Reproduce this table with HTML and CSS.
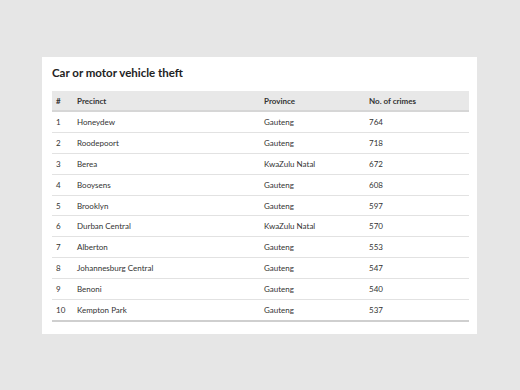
FILE: index.html
```html
<!DOCTYPE html>
<html>
<head>
<meta charset="utf-8">
<link rel="stylesheet" href="styles.css">
</head>
<body>
<div class="card">
  <h2 class="title">Car or motor vehicle theft</h2>
  <table class="tbl">
    <colgroup>
      <col class="c-num"><col class="c-prec"><col class="c-prov"><col class="c-cnt">
    </colgroup>
    <thead>
      <tr><th>#</th><th>Precinct</th><th>Province</th><th>No. of crimes</th></tr>
    </thead>
    <tbody>
      <tr><td>1</td><td>Honeydew</td><td>Gauteng</td><td>764</td></tr>
      <tr><td>2</td><td>Roodepoort</td><td>Gauteng</td><td>718</td></tr>
      <tr><td>3</td><td>Berea</td><td>KwaZulu Natal</td><td>672</td></tr>
      <tr><td>4</td><td>Booysens</td><td>Gauteng</td><td>608</td></tr>
      <tr><td>5</td><td>Brooklyn</td><td>Gauteng</td><td>597</td></tr>
      <tr><td>6</td><td>Durban Central</td><td>KwaZulu Natal</td><td>570</td></tr>
      <tr><td>7</td><td>Alberton</td><td>Gauteng</td><td>553</td></tr>
      <tr><td>8</td><td>Johannesburg Central</td><td>Gauteng</td><td>547</td></tr>
      <tr><td>9</td><td>Benoni</td><td>Gauteng</td><td>540</td></tr>
      <tr><td>10</td><td>Kempton Park</td><td>Gauteng</td><td>537</td></tr>
    </tbody>
  </table>
</div>
</body>
</html>
```
FILE: styles.css
```css
html, body {
  margin: 0;
  padding: 0;
  background: #e6e6e6;
  font-family: Lato, "Open Sans", sans-serif;
  color: #333;
}
body {
  padding: 57px 0 0 42px;
}
.card {
  width: 417px;
  background: #fff;
  padding: 9px 8px 12px 10px;
}
.title {
  margin: 0;
  font-size: 11.5px;
  font-weight: 700;
  line-height: 14px;
  padding: 0 0 11px 0;
  color: #222;
}
.tbl {
  width: 417px;
  border-collapse: collapse;
  table-layout: fixed;
  font-size: 8px;
}
.c-num { width: 21px; }
.c-prec { width: 187px; }
.c-prov { width: 105px; }
.c-cnt { width: 104px; }
.tbl th {
  background: #e8e8e8;
  text-align: left;
  font-weight: 700;
  height: 19px;
  padding: 0 4px;
  border-bottom: 2px solid #d6d6d6;
}
.tbl td {
  height: 19.9px;
  padding: 0 4px;
  border-bottom: 1px solid #e2e2e2;
}
.tbl tbody tr:last-child td {
  border-bottom: 2px solid #cfcfcf;
}
```
